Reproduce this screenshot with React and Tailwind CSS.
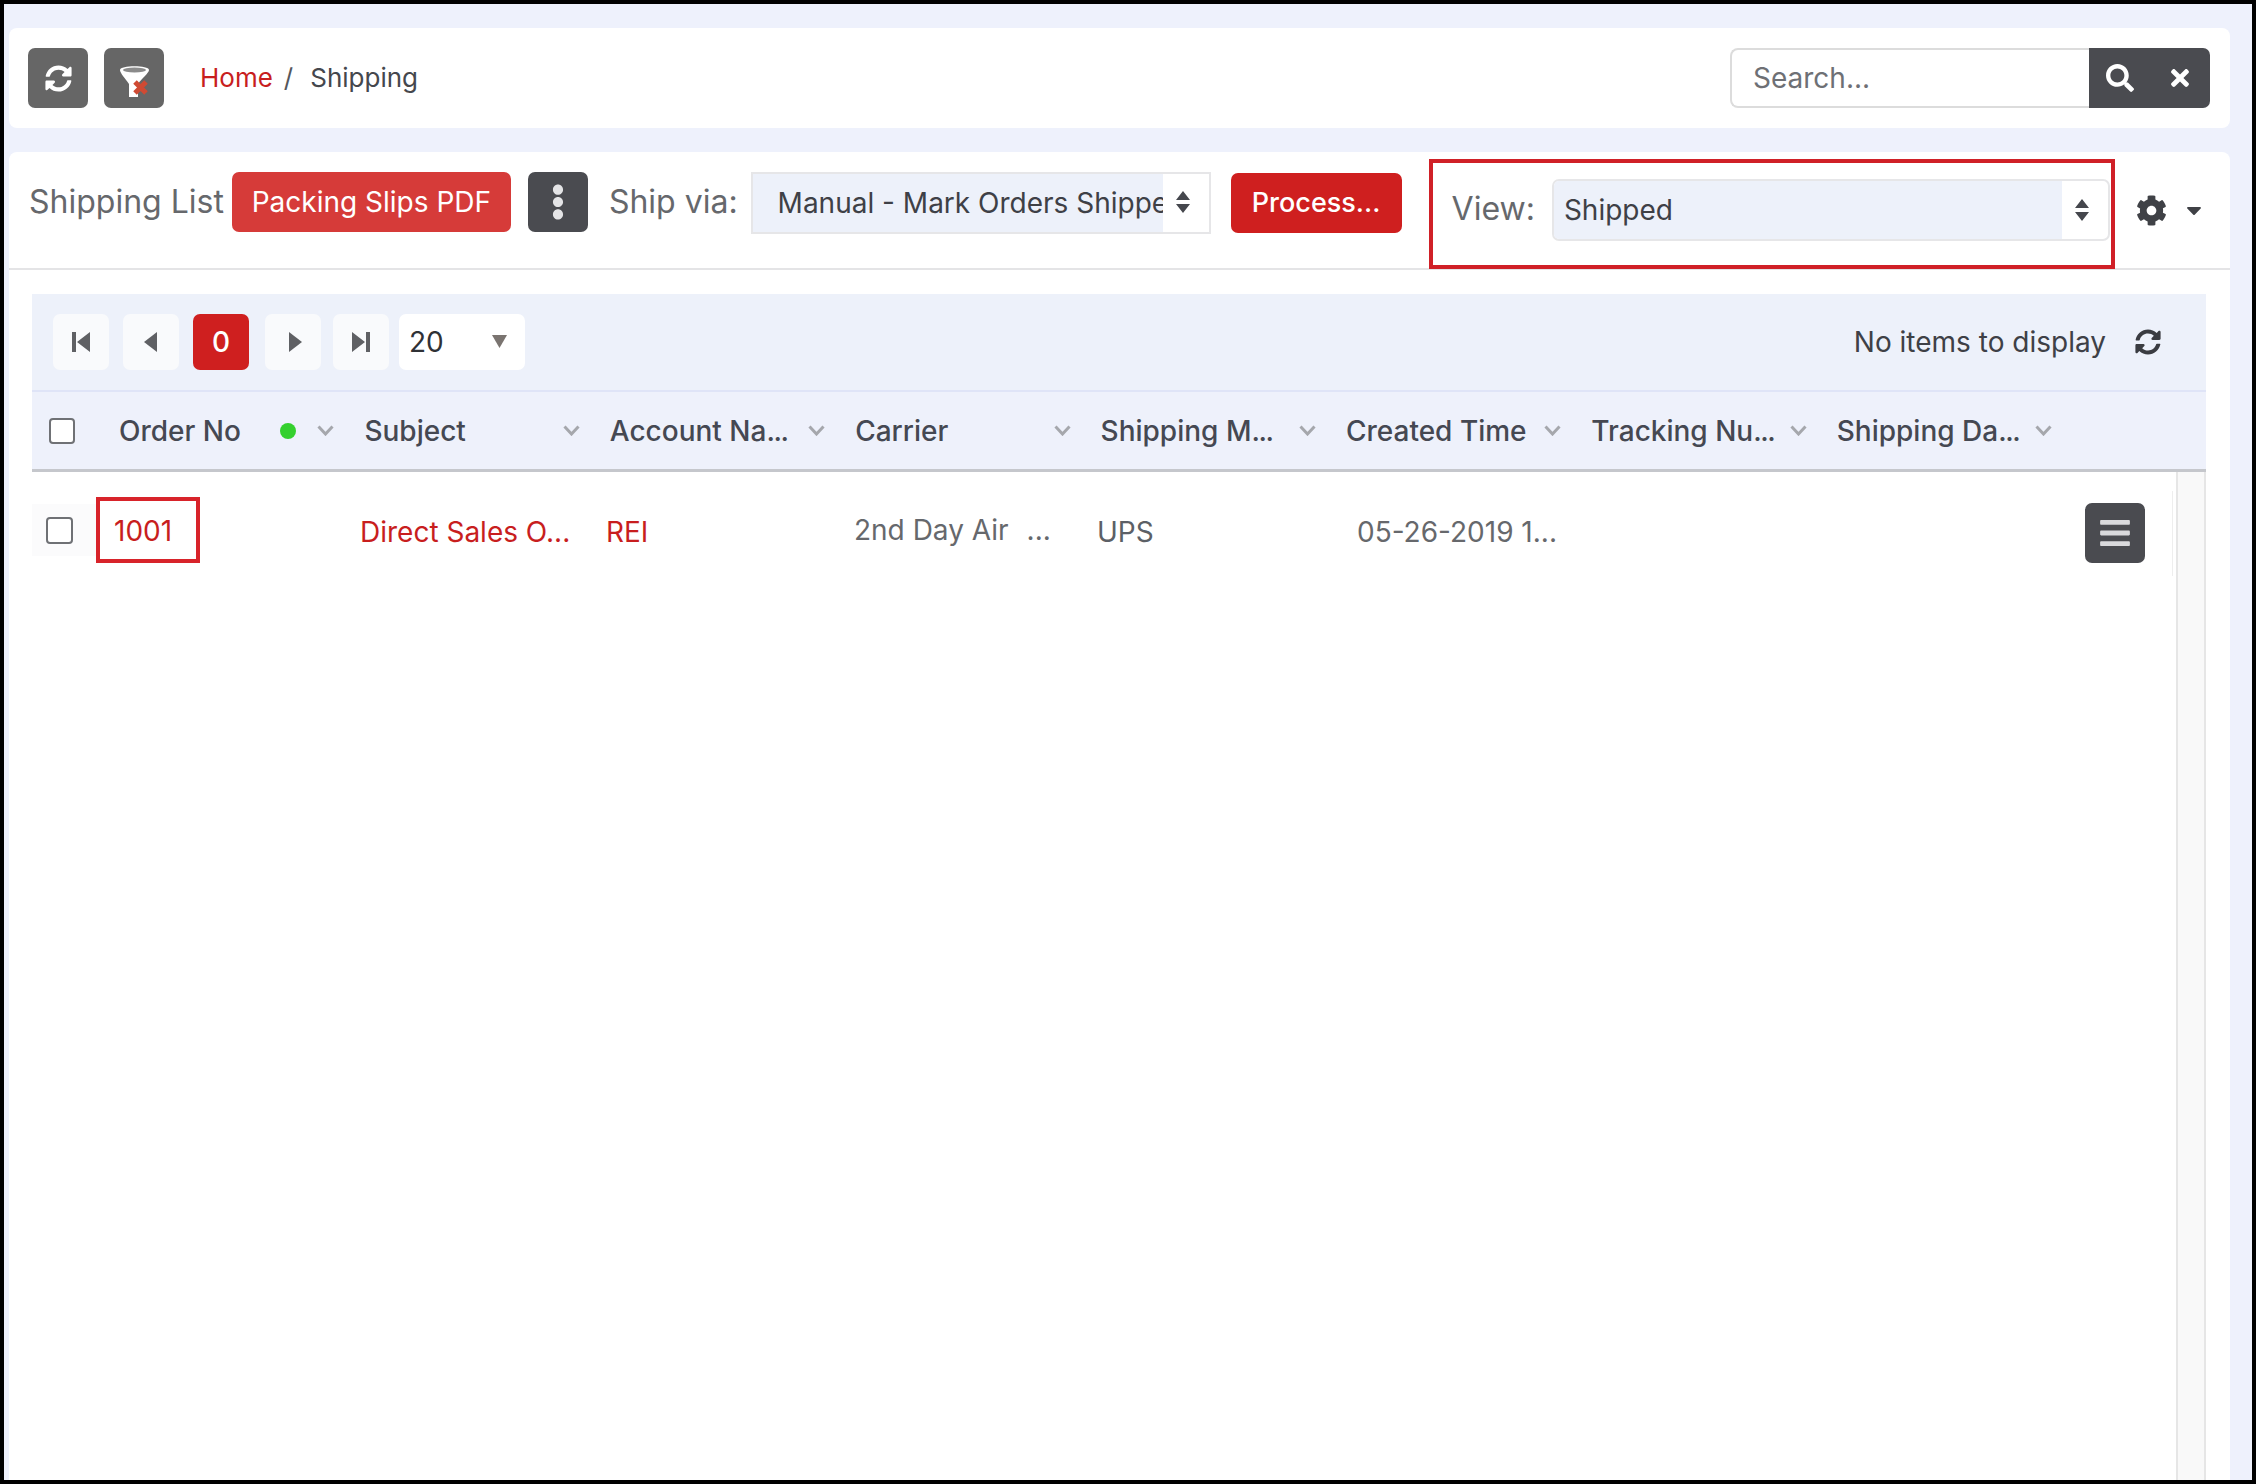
import { FaSyncAlt, FaSearch, FaTimes, FaEllipsisV, FaCog, FaBars, FaCaretDown } from 'react-icons/fa'

const COLUMNS = ['Order No', 'Subject', 'Account Na...', 'Carrier', 'Shipping M...', 'Created Time', 'Tracking Nu...', 'Shipping Da...']

function Chevron() {
  return (
    <svg width="17" height="11" viewBox="0 0 17 11" className="shrink-0">
      <path d="M1.5 1.5 8.5 9l7-7.5" fill="none" stroke="#a5a7ac" strokeWidth="3" />
    </svg>
  )
}

function SortArrows() {
  return (
    <svg width="16" height="24" viewBox="0 0 16 24" className="shrink-0">
      <path d="M8 1 15 10H1z M8 23 1 14h14z" fill="#45474d" />
    </svg>
  )
}

function ClearFilterIcon() {
  return (
    <svg width="36" height="40" viewBox="0 0 36 40">
      <path d="M4 12 C4 7 33 7 33 12 C33 15 26 20 22 26 L22 39 L13 39 L13 26 C9 20 4 15 4 12Z" fill="#fff" />
      <ellipse cx="18.5" cy="12" rx="11.5" ry="2.4" fill="#8b8b8b" />
      <path d="M19 24 L30 35 M30 24 L19 35" stroke="#cf4a33" strokeWidth="5" />
    </svg>
  )
}

function PagerButton({ className = '', children }) {
  return (
    <div className={`w-[56px] h-[56px] rounded-[7px] bg-[#f9fafc] flex items-center justify-center ${className}`}>
      {children}
    </div>
  )
}

function PagerIcon({ d }) {
  return (
    <svg width="20" height="22" viewBox="0 0 20 22">
      <path d={d} fill="#5f6064" />
    </svg>
  )
}

function Checkbox({ className = '' }) {
  return <div className={`w-[26px] h-[26px] rounded-[4px] border-2 border-[#6f7175] bg-white shrink-0 ${className}`} />
}

export default function App() {
  return (
    <div className="w-[2256px] h-[1484px] bg-black p-[4px] font-['Inter',sans-serif] overflow-hidden">
      <div className="h-full bg-[#eef1fc] pt-[24px] pl-[5px] pr-[22px] flex flex-col">
        {/* Top bar */}
        <div className="h-[100px] shrink-0 bg-white rounded-[8px] flex items-center pl-[19px] pr-[20px]">
          <div className="w-[60px] h-[60px] rounded-[7px] bg-[#666666] flex items-center justify-center text-white">
            <FaSyncAlt size={27} />
          </div>
          <div className="w-[60px] h-[60px] rounded-[7px] bg-[#666666] flex items-center justify-center ml-[16px]">
            <ClearFilterIcon />
          </div>
          <div className="ml-[36px] text-[26px] flex items-center pb-[2px]">
            <span className="text-[#c81e1e]">Home</span>
            <span className="text-[#55575c] ml-[11px]">/</span>
            <span className="text-[#45474d] ml-[17px]">Shipping</span>
          </div>
          <div className="ml-auto flex h-[60px]">
            <div className="w-[359px] border-2 border-r-0 border-[#dcdcdc] rounded-l-[8px] bg-white flex items-center pl-[21px] text-[28px] text-[#6e7075]">
              Search...
            </div>
            <div className="w-[121px] bg-[#4a4b50] rounded-r-[7px] flex items-center text-white">
              <FaSearch size={28} className="ml-[17px]" />
              <FaTimes size={26} className="ml-[33px]" />
            </div>
          </div>
        </div>

        {/* List header */}
        <div className="mt-[24px] h-[118px] shrink-0 bg-white rounded-t-[8px] border-b-2 border-[#e4e4e6] flex items-start pl-[20px] pt-[7px]">
          <div className="mt-[13px] h-[60px] flex items-center text-[32px] text-[#66686c]">Shipping List</div>
          <div className="mt-[13px] ml-[8px] w-[279px] h-[60px] rounded-[7px] bg-[#d63b39] text-white text-[28px] flex items-center justify-center">
            Packing Slips PDF
          </div>
          <div className="mt-[13px] ml-[17px] w-[60px] h-[60px] rounded-[7px] bg-[#4a4b50] text-[#e4e4e6] flex items-center justify-center">
            <FaEllipsisV size={36} />
          </div>
          <div className="mt-[13px] ml-[21px] h-[60px] flex items-center text-[32px] text-[#66686c]">Ship via:</div>
          <div className="mt-[13px] ml-[13px] w-[460px] h-[62px] border-2 border-[#e6e6e8] flex">
            <div className="w-[410px] bg-[#edf1fa] overflow-hidden whitespace-nowrap flex items-center pl-[25px] text-[28px] text-[#3e4046]">
              Manual - Mark Orders Shipped
            </div>
            <div className="flex-1 flex items-center justify-center pb-[2px] pr-[5px]">
              <SortArrows />
            </div>
          </div>
          <div className="mt-[14px] ml-[20px] w-[171px] h-[60px] rounded-[7px] bg-[#cf1f1f] text-white text-[27px] font-medium flex items-center justify-center">
            Process...
          </div>
          <div className="ml-[27px] w-[686px] h-[110px] border-4 border-[#d02027] flex items-start pl-[19px] pt-[16px]">
            <div className="h-[60px] flex items-center text-[32px] text-[#66686c]">View:</div>
            <div className="ml-[17px] w-[558px] h-[62px] border-2 border-[#e6e6e8] rounded-[7px] flex overflow-hidden">
              <div className="w-[508px] bg-[#edf1fa] flex items-center pl-[10px] text-[28px] text-[#3e4046]">Shipped</div>
              <div className="flex-1 flex items-center justify-center pr-[6px]">
                <SortArrows />
              </div>
            </div>
          </div>
          <div className="ml-[21px] mt-[27px] h-[48px] flex items-center text-[#3f4146]">
            <FaCog size={31} />
            <FaCaretDown size={24} className="ml-[15px]" />
          </div>
        </div>

        {/* Grid */}
        <div className="flex-1 bg-white pt-[24px] pl-[23px] pr-[24px] flex flex-col min-h-0">
          <div className="h-[98px] shrink-0 bg-[#edf1fa] border-b-2 border-[#dfe4f7] flex items-center pl-[21px] pr-[45px]">
            <PagerButton>
              <PagerIcon d="M1 1h4v20H1z M19 1v20L6 11z" />
            </PagerButton>
            <PagerButton className="ml-[14px]">
              <PagerIcon d="M16 1v20L3 11z" />
            </PagerButton>
            <div className="ml-[14px] w-[56px] h-[56px] rounded-[7px] bg-[#cf1f1f] text-white text-[28px] font-medium flex items-center justify-center">0</div>
            <PagerButton className="ml-[16px]">
              <PagerIcon d="M6 1v20l13-10z" />
            </PagerButton>
            <PagerButton className="ml-[12px]">
              <PagerIcon d="M1 1v20l13-10z M15 1h4v20h-4z" />
            </PagerButton>
            <div className="ml-[10px] w-[126px] h-[56px] rounded-[7px] bg-white flex items-center pl-[10px] text-[28px] text-[#2f3136]">
              20
              <svg width="15" height="13" viewBox="0 0 15 13" className="ml-[48px] mb-[2px]">
                <path d="M0 0h15L7.5 13z" fill="#7a7470" />
              </svg>
            </div>
            <div className="ml-auto text-[28px] text-[#3e4046]">No items to display</div>
            <FaSyncAlt size={26} className="ml-[29px] text-[#3a3c41]" />
          </div>

          <div className="h-[80px] shrink-0 bg-[#eef1fb] border-b-[3px] border-[#c5c7cc] flex items-center">
            <div className="w-[87px] shrink-0 pl-[17px]">
              <Checkbox />
            </div>
            {COLUMNS.map((col, i) => (
              <div key={col} className="w-[245.4px] shrink-0 flex items-center pr-[30px] text-[28px] font-medium text-[#454852]">
                <span className="whitespace-nowrap">
                  {col.replace('...', '')}
                  {col.endsWith('...') && <span className="tracking-[-1.5px]">...</span>}
                </span>
                {i === 0 && <span className="ml-auto w-[16px] h-[16px] rounded-full bg-[#34d02e]" />}
                {i === 0 ? <span className="ml-[21px]"><Chevron /></span> : <span className="ml-auto"><Chevron /></span>}
              </div>
            ))}
          </div>

          <div className="flex-1 flex min-h-0">
            <div className="flex-1 h-[122px] flex items-center text-[28px]">
              <div className="w-[64px] h-[52px] shrink-0 mb-[6px] bg-[#fbfbfc] flex items-center pl-[14px]">
                <Checkbox className="w-[27px] h-[27px]" />
              </div>
              <div className="w-[104px] h-[66px] shrink-0 mb-[6px] border-4 border-[#d8232a] flex items-center pl-[14px] pt-[2px] text-[#c81e1e]">1001</div>
              <div className="ml-[160px] w-[246px] shrink-0 whitespace-nowrap text-[#c81e1e] pb-[2px]">Direct Sales O...</div>
              <div className="w-[248px] shrink-0 text-[#c81e1e] pb-[2px]">REI</div>
              <div className="w-[243px] shrink-0 flex text-[#66686c] pb-[6px]">
                <span>2nd Day Air</span>
                <span className="ml-[18px]">...</span>
              </div>
              <div className="w-[260px] shrink-0 text-[#5c6066] pb-[2px]">UPS</div>
              <div className="whitespace-nowrap text-[#66686c] pb-[2px]">05-26-2019 1...</div>
              <div className="ml-auto w-[60px] h-[60px] rounded-[7px] bg-[#4a4b50] text-[#d9d9dc] flex items-center justify-center">
                <FaBars size={34} />
              </div>
              <div className="ml-[27px] mr-[3px] w-[1px] h-[85px] bg-[#eeeeee]" />
            </div>
            <div className="w-[30px] shrink-0 bg-[#f9f9f9] border-x-2 border-[#e6e6e6]" />
          </div>
        </div>
      </div>
    </div>
  )
}
